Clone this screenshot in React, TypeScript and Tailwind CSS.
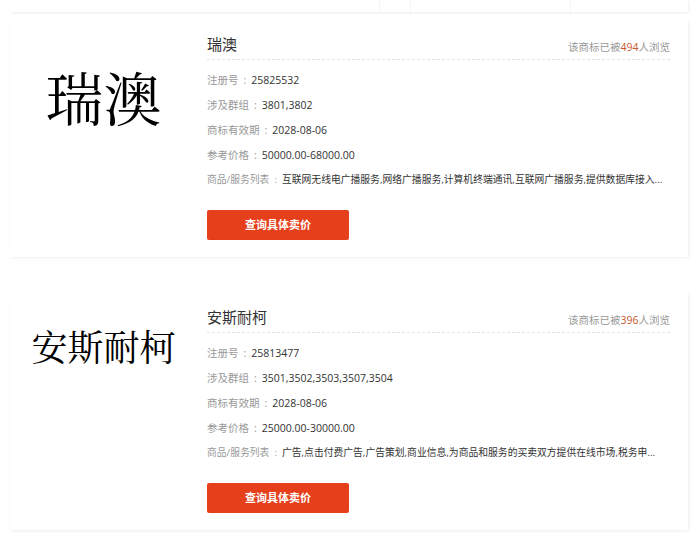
const FONT = '"Open Sans", "Noto Sans CJK SC", sans-serif'
const LOGO_FONT = '"Noto Serif CJK SC", "Noto Sans CJK SC", serif'

type Mark = {
  name: string
  views: number
  regNo: string
  groups: string
  expires: string
  price: string
  goods: string
  logoSize: string
  logoBox: string
}

const MARKS: Mark[] = [
  {
    name: '瑞澳',
    views: 494,
    regNo: '25825532',
    groups: '3801,3802',
    expires: '2028-08-06',
    price: '50000.00-68000.00',
    goods: '互联网无线电广播服务,网络广播服务,计算机终端通讯,互联网广播服务,提供数据库接入...',
    logoSize: 'text-[58px]',
    logoBox: 'h-[152px]',
  },
  {
    name: '安斯耐柯',
    views: 396,
    regNo: '25813477',
    groups: '3501,3502,3503,3507,3504',
    expires: '2028-08-06',
    price: '25000.00-30000.00',
    goods: '广告,点击付费广告,广告策划,商业信息,为商品和服务的买卖双方提供在线市场,税务申...',
    logoSize: 'text-[36px]',
    logoBox: 'h-[106px]',
  },
]

// ── one info row ─────────────────────────────────────────────────

function Row({ label, value, small = false }: { label: string; value: string; small?: boolean }) {
  return (
    <div className={`h-[25px] flex items-center whitespace-nowrap ${small ? 'text-[9.8px]' : 'text-[10.5px]'}`}>
      <span className="text-[#999] shrink-0">{label}</span>
      <span className="text-[#999] shrink-0 mx-[5px]">:</span>
      <span className="text-[#333] truncate min-w-0">{value}</span>
    </div>
  )
}

// ── trademark card ───────────────────────────────────────────────

function MarkCard({ m }: { m: Mark }) {
  return (
    <div className="mx-[10px] w-[678px] h-[237px] bg-white flex shadow-[1px_1px_3px_rgba(0,0,0,0.07)]">
      <div className={`w-[187px] shrink-0 flex items-center justify-center ${m.logoBox}`}>
        <span className={`${m.logoSize} text-black leading-none`} style={{ fontFamily: LOGO_FONT }}>
          {m.name}
        </span>
      </div>
      <div className="flex-1 pl-[10px] pr-[18px] min-w-0">
        <div className="h-[40px] flex items-end justify-between pb-[7px] border-b border-dashed border-[#e3e3e3]">
          <span className="text-[15px] text-[#333] leading-none">{m.name}</span>
          <span className="text-[10.5px] text-[#999] leading-none">
            该商标已被<span className="text-[#c9582c]">{m.views}</span>人浏览
          </span>
        </div>
        <div className="pt-[8px]">
          <Row label="注册号" value={m.regNo} />
          <Row label="涉及群组" value={m.groups} />
          <Row label="商标有效期" value={m.expires} />
          <Row label="参考价格" value={m.price} />
          <Row label="商品/服务列表" value={m.goods} small />
        </div>
        <button className="mt-[17px] w-[142px] h-[30px] rounded-[2px] bg-[#e5401b] text-white text-[11px] font-semibold">
          查询具体卖价
        </button>
      </div>
    </div>
  )
}

export default function App() {
  return (
    <div className="w-[699px] h-[541px] bg-white overflow-hidden" style={{ fontFamily: FONT }}>
      {/* partial card above */}
      <div className="mx-[10px] w-[678px] h-[12px] bg-white flex shadow-[1px_1px_3px_rgba(0,0,0,0.07)]">
        <div className="w-[369px]" />
        <div className="w-[31px] border-l border-[#f5f5f5]" />
        <div className="w-[160px] border-l border-[#f5f5f5]" />
        <div className="flex-1 border-l border-[#f5f5f5]" />
      </div>
      <div className="h-[8px]" />
      <MarkCard m={MARKS[0]} />
      <div className="h-[36px]" />
      <MarkCard m={MARKS[1]} />
    </div>
  )
}
